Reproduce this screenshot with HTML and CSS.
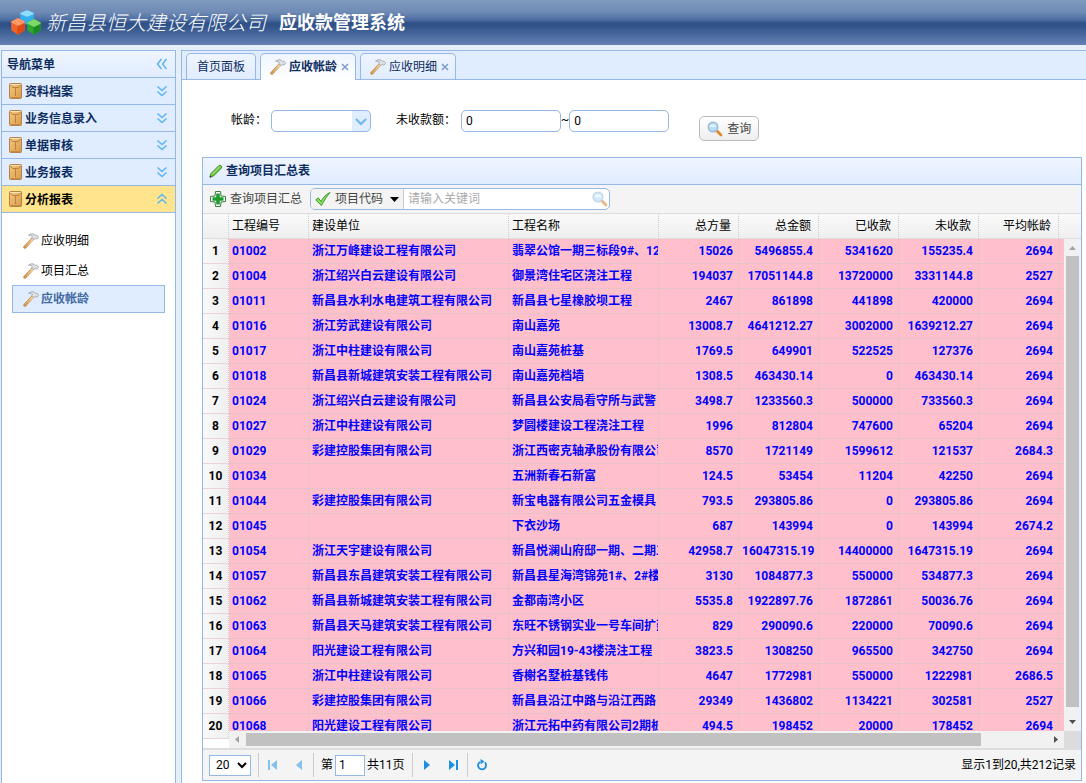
FILE: index.html
```html
<!DOCTYPE html>
<html lang="zh-CN">
<head>
<meta charset="utf-8" />
<title>应收款管理系统</title>
<link rel="stylesheet" href="styles.css">
</head>
<body>
<svg class="defs" width="0" height="0">
    <linearGradient id="wood" x1="0" y1="0" x2="1" y2="1">
        <stop offset="0" stop-color="#f3c983"/>
        <stop offset="1" stop-color="#d99a48"/>
    </linearGradient>
    <linearGradient id="handle" x1="1" y1="0" x2="0" y2="1">
        <stop offset="0" stop-color="#f7d9a4"/>
        <stop offset="1" stop-color="#d8964a"/>
    </linearGradient>
    <symbol id="hammer" viewBox="0 0 16 16">
        <path d="M1.800 14.200L9.500 6" stroke="#b9834a" stroke-width="3" stroke-linecap="round"/>
        <path d="M1.800 14L9.500 5.800L10 6.300L2.300 14.500Z" stroke="url(#handle)" stroke-width="1.400" stroke-linejoin="round"/>
        <path d="M5.500 2.200C7 .8 9.500 .4 11.500 1.300L12.600 2.400L14 2.200L15.600 4.200L14 6.200L12.400 5.400L10.800 6.600L8.800 4.600L9.400 3.200C8.200 2.400 6.800 2.300 5.500 2.200Z" fill="#dfe2e4" stroke="#92979b" stroke-width=".7"/>
    </symbol>
    <symbol id="box" viewBox="0 0 14 16">
        <rect x=".5" y=".5" width="12" height="15" rx="1" fill="url(#wood)" stroke="#b5824a"/>
        <path d="M1.500 1.500H11.500" stroke="#fbe3b4"/>
        <path d="M1.500 2L3.500 4.500H9.500L11.500 2M6.500 5V13" fill="none" stroke="#b87c36" stroke-width=".9"/>
        <path d="M1.500 14.500H11.500" stroke="#c58a42"/>
    </symbol>
    <symbol id="down" viewBox="0 0 12 12">
        <path d="M1.500 1.500L6 5.500L10.500 1.500M1.500 6.500L6 10.500L10.500 6.500" fill="none" stroke="#5cb3f2" stroke-width="1.500"/>
    </symbol>
    <symbol id="lens" viewBox="0 0 16 16">
        <path d="M10 10L14 14" stroke="#e0862b" stroke-width="2.600" stroke-linecap="round"/>
        <circle cx="6" cy="6" r="4.800" fill="#b5dcfa" stroke="#9db9d8" stroke-width="1.400"/>
        <path d="M2.500 5.500C3.500 2.500 8.500 2.500 9.500 5.500C7 6.500 5 6.500 2.500 5.500Z" fill="#e3f3ff"/>
    </symbol>
</svg>

<div class="head">
    <svg class="logo" width="32" height="28" viewBox="0 0 32 28">
        <g stroke-width="1.500" stroke-linejoin="round">
            <path d="M17 2L23 4.500V11.500L17 15L11 11.500V4.500Z" fill="#36aef0" stroke="#36aef0"/>
            <path d="M17 2L23 4.500L17 7L11 4.500Z" fill="#8fdcff" stroke="#8fdcff"/>
            <path d="M8 10L14 13V21L8 25L2 21V13Z" fill="#ef6428" stroke="#ef6428"/>
            <path d="M8 10L14 13L8 16L2 13Z" fill="#ff9a68" stroke="#ff9a68"/>
            <path d="M8 18L14 15.500V21L8 25Z" fill="#dd4a14" stroke="#dd4a14"/>
            <path d="M24 11L30 14V21L24 25L18 21V14Z" fill="#2fa832" stroke="#2fa832"/>
            <path d="M24 11L30 14L24 17L18 14Z" fill="#7fd968" stroke="#7fd968"/>
            <path d="M24 19L30 16.500V21L24 25Z" fill="#1c8d22" stroke="#1c8d22"/>
        </g>
    </svg>
    <span class="company">新昌县恒大建设有限公司</span>
    <span class="system">应收款管理系统</span>
</div>

<div class="layout">
    <div class="west">
        <div class="nav-title">
            <span>导航菜单</span>
            <svg width="12" height="12" viewBox="0 0 12 12"><path d="M5.500 1L1.500 6L5.500 11M10.500 1L6.500 6L10.500 11" fill="none" stroke="#5cb3f2" stroke-width="1.500"/></svg>
        </div>
        <a class="nav-item" href="#"><svg width="14" height="16"><use href="#box"/></svg><span>资料档案</span><svg width="12" height="12"><use href="#down"/></svg></a>
        <a class="nav-item" href="#"><svg width="14" height="16"><use href="#box"/></svg><span>业务信息录入</span><svg width="12" height="12"><use href="#down"/></svg></a>
        <a class="nav-item" href="#"><svg width="14" height="16"><use href="#box"/></svg><span>单据审核</span><svg width="12" height="12"><use href="#down"/></svg></a>
        <a class="nav-item" href="#"><svg width="14" height="16"><use href="#box"/></svg><span>业务报表</span><svg width="12" height="12"><use href="#down"/></svg></a>
        <a class="nav-item nav-open" href="#"><svg width="14" height="16"><use href="#box"/></svg><span>分析报表</span><svg class="up" width="12" height="12"><use href="#down"/></svg></a>
        <div class="sub">
            <a href="#"><svg width="16" height="16"><use href="#hammer"/></svg>应收明细</a>
            <a href="#"><svg width="16" height="16"><use href="#hammer"/></svg>项目汇总</a>
            <a class="selected" href="#"><svg width="16" height="16"><use href="#hammer"/></svg>应收帐龄</a>
        </div>
    </div>

    <div class="center">
        <div class="tabs">
            <a class="tab" href="#">首页面板</a>
            <a class="tab tab-selected" href="#"><svg width="16" height="16"><use href="#hammer"/></svg>应收帐龄<svg class="close" width="8" height="8" viewBox="0 0 8 8"><path d="M1 1L7 7M7 1L1 7"/></svg></a>
            <a class="tab" href="#"><svg width="16" height="16"><use href="#hammer"/></svg>应收明细<svg class="close" width="8" height="8" viewBox="0 0 8 8"><path d="M1 1L7 7M7 1L1 7"/></svg></a>
        </div>

        <form class="search">
            <label for="age">帐龄：</label>
            <select id="age" class="combo"><option></option></select>
            <label class="label-amount" for="min">未收款额：</label>
            <input id="min" class="text" type="text" value="0">
            <label for="max">~</label>
            <input id="max" class="text" type="text" value="0">
            <button class="query" type="button"><svg width="16" height="16"><use href="#lens"/></svg>查询</button>
        </form>

        <div class="panel">
            <div class="panel-title">
                <svg width="16" height="16" viewBox="0 0 16 16"><path d="M2 14L3 10.500L11 2.500C12 1.500 14.500 3.500 13.500 5L5.500 13Z" fill="#6cc644" stroke="#3c8f23"/><path d="M4 11.500L12 3.500" stroke="#c3f0a0"/><path d="M1.500 14.800L2.300 12.500L3.800 14Z" fill="#333"/></svg>
                查询项目汇总表
            </div>
            <div class="toolbar">
                <button class="add" type="button">
                    <svg width="16" height="16" viewBox="0 0 16 16"><path d="M5.500 .5H10.500L11 5L15.500 5.500V10.500L11 11L10.500 15.500H5.500L5 11L.5 10.500V5.500L5 5Z" fill="#fff" stroke="#3b7d3d" stroke-linejoin="round"/><path d="M8 2.500V13.500M2.500 8H13.500" stroke="#1f9a2c" stroke-width="3.600"/></svg>
                    查询项目汇总
                </button>
                <div class="searchbox">
                    <button class="field" type="button">
                        <svg width="16" height="16" viewBox="0 0 16 16"><path d="M.8 9L3.300 6.800L6 10.500C8.500 6 11 3.500 15 1.500C11.500 5.500 9 10 6.500 14.500Z" fill="#8ede66" stroke="#3c9a2a"/></svg>
                        项目代码
                        <svg class="caret" width="9" height="5" viewBox="0 0 9 5"><path d="M0 0H9L4.500 5Z"/></svg>
                    </button>
                    <input type="text" placeholder="请输入关键词" aria-label="关键词">
                    <svg class="faded" width="16" height="16"><use href="#lens"/></svg>
                </div>
            </div>

            <div class="grid">
                <table class="rownum">
                    <tr><td class="corner"></td></tr>
                    <tr><td>1</td></tr>
                    <tr><td>2</td></tr>
                    <tr><td>3</td></tr>
                    <tr><td>4</td></tr>
                    <tr><td>5</td></tr>
                    <tr><td>6</td></tr>
                    <tr><td>7</td></tr>
                    <tr><td>8</td></tr>
                    <tr><td>9</td></tr>
                    <tr><td>10</td></tr>
                    <tr><td>11</td></tr>
                    <tr><td>12</td></tr>
                    <tr><td>13</td></tr>
                    <tr><td>14</td></tr>
                    <tr><td>15</td></tr>
                    <tr><td>16</td></tr>
                    <tr><td>17</td></tr>
                    <tr><td>18</td></tr>
                    <tr><td>19</td></tr>
                    <tr><td>20</td></tr>
                </table>
                <div class="view">
                    <div class="rows">
                        <table class="data">
                            <colgroup><col class="c-code"><col class="c-unit"><col class="c-name"><col class="c-num"><col class="c-num"><col class="c-num"><col class="c-num"><col class="c-num"><col></colgroup>
                            <thead>
                                <tr><th>工程编号</th><th>建设单位</th><th>工程名称</th><th>总方量</th><th>总金额</th><th>已收款</th><th>未收款</th><th>平均帐龄</th><th></th></tr>
                            </thead>
                            <tbody>
                                <tr><td>01002</td><td>浙江万峰建设工程有限公司</td><td>翡翠公馆一期三标段9#、12#楼</td><td>15026</td><td>5496855.4</td><td>5341620</td><td>155235.4</td><td>2694</td><td></td></tr>
                                <tr><td>01004</td><td>浙江绍兴白云建设有限公司</td><td>御景湾住宅区浇注工程</td><td>194037</td><td>17051144.8</td><td>13720000</td><td>3331144.8</td><td>2527</td><td></td></tr>
                                <tr><td>01011</td><td>新昌县水利水电建筑工程有限公司</td><td>新昌县七星橡胶坝工程</td><td>2467</td><td>861898</td><td>441898</td><td>420000</td><td>2694</td><td></td></tr>
                                <tr><td>01016</td><td>浙江劳武建设有限公司</td><td>南山嘉苑</td><td>13008.7</td><td>4641212.27</td><td>3002000</td><td>1639212.27</td><td>2694</td><td></td></tr>
                                <tr><td>01017</td><td>浙江中柱建设有限公司</td><td>南山嘉苑桩基</td><td>1769.5</td><td>649901</td><td>522525</td><td>127376</td><td>2694</td><td></td></tr>
                                <tr><td>01018</td><td>新昌县新城建筑安装工程有限公司</td><td>南山嘉苑档墙</td><td>1308.5</td><td>463430.14</td><td>0</td><td>463430.14</td><td>2694</td><td></td></tr>
                                <tr><td>01024</td><td>浙江绍兴白云建设有限公司</td><td>新昌县公安局看守所与武警</td><td>3498.7</td><td>1233560.3</td><td>500000</td><td>733560.3</td><td>2694</td><td></td></tr>
                                <tr><td>01027</td><td>浙江中柱建设有限公司</td><td>梦圆楼建设工程浇注工程</td><td>1996</td><td>812804</td><td>747600</td><td>65204</td><td>2694</td><td></td></tr>
                                <tr><td>01029</td><td>彩建控股集团有限公司</td><td>浙江西密克轴承股份有限公司</td><td>8570</td><td>1721149</td><td>1599612</td><td>121537</td><td>2684.3</td><td></td></tr>
                                <tr><td>01034</td><td></td><td>五洲新春石新富</td><td>124.5</td><td>53454</td><td>11204</td><td>42250</td><td>2694</td><td></td></tr>
                                <tr><td>01044</td><td>彩建控股集团有限公司</td><td>新宝电器有限公司五金模具</td><td>793.5</td><td>293805.86</td><td>0</td><td>293805.86</td><td>2694</td><td></td></tr>
                                <tr><td>01045</td><td></td><td>下衣沙场</td><td>687</td><td>143994</td><td>0</td><td>143994</td><td>2674.2</td><td></td></tr>
                                <tr><td>01054</td><td>浙江天宇建设有限公司</td><td>新昌悦澜山府邸一期、二期工程</td><td>42958.7</td><td>16047315.19</td><td>14400000</td><td>1647315.19</td><td>2694</td><td></td></tr>
                                <tr><td>01057</td><td>新昌县东昌建筑安装工程有限公司</td><td>新昌县星海湾锦苑1#、2#楼</td><td>3130</td><td>1084877.3</td><td>550000</td><td>534877.3</td><td>2694</td><td></td></tr>
                                <tr><td>01062</td><td>新昌县新城建筑安装工程有限公司</td><td>金都南湾小区</td><td>5535.8</td><td>1922897.76</td><td>1872861</td><td>50036.76</td><td>2694</td><td></td></tr>
                                <tr><td>01063</td><td>新昌县天马建筑安装工程有限公司</td><td>东旺不锈钢实业一号车间扩建</td><td>829</td><td>290090.6</td><td>220000</td><td>70090.6</td><td>2694</td><td></td></tr>
                                <tr><td>01064</td><td>阳光建设工程有限公司</td><td>方兴和园19-43楼浇注工程</td><td>3823.5</td><td>1308250</td><td>965500</td><td>342750</td><td>2694</td><td></td></tr>
                                <tr><td>01065</td><td>浙江中柱建设有限公司</td><td>香榭名墅桩基钱伟</td><td>4647</td><td>1772981</td><td>550000</td><td>1222981</td><td>2686.5</td><td></td></tr>
                                <tr><td>01066</td><td>彩建控股集团有限公司</td><td>新昌县沿江中路与沿江西路</td><td>29349</td><td>1436802</td><td>1134221</td><td>302581</td><td>2527</td><td></td></tr>
                                <tr><td>01068</td><td>阳光建设工程有限公司</td><td>浙江元拓中药有限公司2期桩基</td><td>494.5</td><td>198452</td><td>20000</td><td>178452</td><td>2694</td><td></td></tr>
                            </tbody>
                        </table>
                    </div>
                    <div class="vscroll">
                        <div class="vscroll-head"></div>
                        <svg width="17" height="17" viewBox="0 0 17 17"><path d="M5 11H12L8.500 7Z" fill="#a3a3a3"/></svg>
                        <div class="vthumb"></div>
                        <svg width="17" height="17" viewBox="0 0 17 17"><path d="M5 6H12L8.500 10Z" fill="#505050"/></svg>
                    </div>
                    <div class="hscroll">
                        <svg width="17" height="17" viewBox="0 0 17 17"><path d="M10 5V12L6 8.500Z" fill="#a3a3a3"/></svg>
                        <div class="hthumb"></div>
                        <svg width="17" height="17" viewBox="0 0 17 17"><path d="M7 5V12L11 8.500Z" fill="#505050"/></svg>
                    </div>
                    <div class="scroll-corner"></div>
                </div>
            </div>

            <div class="pager">
                <select class="page-size" aria-label="每页记录"><option>20</option></select>
                <i class="sep"></i>
                <button class="off" type="button" aria-label="首页"><svg width="10" height="10" viewBox="0 0 10 10"><path d="M0 0H2V10H0ZM9 0V10L3 5Z"/></svg></button>
                <button class="off" type="button" aria-label="上一页"><svg width="10" height="10" viewBox="0 0 10 10"><path d="M8 0V10L2 5Z"/></svg></button>
                <i class="sep"></i>
                <label class="page">第<input type="text" value="1">共11页</label>
                <i class="sep"></i>
                <button type="button" aria-label="下一页"><svg width="10" height="10" viewBox="0 0 10 10"><path d="M2 0V10L8 5Z"/></svg></button>
                <button type="button" aria-label="末页"><svg width="10" height="10" viewBox="0 0 10 10"><path d="M8 0H10V10H8ZM1 0V10L7 5Z"/></svg></button>
                <i class="sep"></i>
                <button type="button" aria-label="刷新"><svg width="12" height="12" viewBox="0 0 12 12"><path d="M8.800 3.400A4 4 0 1 1 4 2.900" fill="none" stroke="#1b8fe6" stroke-width="1.800"/><path d="M4.500 0L8.500 2.600L4.500 5.200Z"/></svg></button>
                <span class="info">显示1到20,共212记录</span>
            </div>
        </div>
    </div>
</div>
</body>
</html>
```
FILE: styles.css
```css
*{ padding:0; margin:0; box-sizing:border-box;}
body{
    height:100vh;
    overflow:hidden;
    display:flex;
    flex-direction:column;
    background:#e6eef8;
    font:12px/18px Roboto,"Noto Sans CJK SC",sans-serif;
    color:#000;
}
a{ color:inherit; text-decoration:none;}
svg{ flex:none;}
input,select,button{ font:inherit; color:inherit; outline:none;}
button{ border:0; background:none; cursor:pointer;}
.defs{ position:absolute;}

/* 顶部 */
.head{
    flex:none;
    height:45px;
    padding-left:10px;
    display:flex;
    align-items:center;
    color:#fff;
    background:linear-gradient(#7f99be 0,#6f8bb5 12px,#4c6ca0 20px,#2f5188 23px,#31538a 26px,#6482b2 45px);
}
.company{
    margin-left:4px;
    font-size:20px;
    font-weight:300;
    font-style:italic;
}
.system{
    margin-left:13px;
    font-size:18px;
    font-weight:bold;
}
.layout{
    flex:1;
    min-height:0;
    display:flex;
    gap:5px;
    padding:5px 0 0 1px;
}

/* 导航菜单 */
.west{
    flex:none;
    width:175px;
    border:1px solid #95b8e7;
    border-bottom:0;
    background:#fff;
}
.nav-title,.nav-item{
    height:27px;
    display:flex;
    align-items:center;
    justify-content:space-between;
    padding:0 7px 0 5px;
    border-bottom:1px solid #95b8e7;
    color:#0e2d5f;
    font-weight:bold;
}
.nav-title{ background:linear-gradient(#eff5ff,#e0ecff);}
.nav-item{ background:#e0ecff; padding-left:7px;}
.nav-title span,.nav-item span{ padding-top:2px;}
.nav-item span{ flex:1; margin-left:2px;}
.nav-open{ background:#ffe48d; color:#000;}
.up{ transform:rotate(180deg);}
.sub{ padding:14px 10px;}
.sub a{
    display:flex;
    align-items:center;
    gap:2px;
    height:28px;
    margin-bottom:2px;
    padding-left:10px;
    border:1px solid transparent;
}
.sub .selected{
    margin-top:-2px;
    border-color:#95b8e7;
    background:#e0ecff;
    color:#416aa3;
    font-weight:bold;
}

/* 选项卡 */
.center{
    flex:1;
    min-width:0;
    display:flex;
    flex-direction:column;
    border:1px solid #95b8e7;
    border-width:1px 0 0 1px;
    background:#fff;
}
.tabs{
    flex:none;
    display:flex;
    align-items:flex-end;
    gap:4px;
    height:29px;
    padding-left:4px;
    border-bottom:1px solid #95b8e7;
    background:#e0ecff;
}
.tab{
    display:flex;
    align-items:center;
    height:26px;
    padding:0 10px;
    border:1px solid #95b8e7;
    border-bottom:0;
    border-radius:5px 5px 0 0;
    background:linear-gradient(#eff5ff,#e0ecff);
    color:#0e2d5f;
}
.tab svg:first-child{ margin:0 3px 0 -1px;}
.tab .close{
    margin:0 -4px 0 4px;
    fill:none;
    stroke:#7a9cd0;
    stroke-width:1.5;
}
.tab-selected{
    margin-bottom:-1px;
    height:27px;
    background:linear-gradient(#eff5ff,#fff);
    font-weight:bold;
}

/* 查询条件 */
.search{
    flex:none;
    display:flex;
    align-items:flex-start;
    height:77px;
    padding:30px 0 0 49px;
}
.search label{ line-height:20px;}
.combo,.text{
    width:100px;
    height:22px;
    border:1px solid #95b8e7;
    border-radius:5px;
    background:#fff;
    padding:0 4px;
}
.combo{
    appearance:none;
    margin-left:4px;
    background:url("data:image/svg+xml,%3Csvg xmlns='http://www.w3.org/2000/svg' width='18' height='20'%3E%3Crect width='18' height='20' fill='%23e0ecff'/%3E%3Cpath d='M4 8L9 13L14 8' fill='none' stroke='%236bb8f0' stroke-width='2'/%3E%3C/svg%3E") right no-repeat #fff;
}
.search .label-amount{ margin:0 5px 0 25px;}
.query{
    display:flex;
    align-items:center;
    gap:4px;
    height:25px;
    margin:6px 0 0 30px;
    padding:0 7px;
    border:1px solid #bbb;
    border-radius:5px;
    background:linear-gradient(#fff,#eee);
    color:#444;
}

/* 数据表 */
.panel{
    flex:1;
    min-height:0;
    display:flex;
    flex-direction:column;
    margin:0 4px 2px 20px;
    border:1px solid #95b8e7;
}
.panel-title{
    flex:none;
    display:flex;
    align-items:center;
    gap:2px;
    height:27px;
    padding-left:5px;
    border-bottom:1px solid #95b8e7;
    background:linear-gradient(#eff5ff,#e0ecff);
    color:#0e2d5f;
    font-weight:bold;
}
.toolbar{
    flex:none;
    display:flex;
    align-items:center;
    height:29px;
    padding-left:7px;
    border-bottom:1px solid #ddd;
    background:#f4f4f4;
    color:#444;
}
.add,.field{ display:flex; align-items:center; gap:4px;}
.searchbox{
    display:flex;
    align-items:center;
    width:300px;
    height:22px;
    margin-left:8px;
    border:1px solid #95b8e7;
    border-radius:5px;
    background:#fff;
    overflow:hidden;
}
.field{
    height:20px;
    padding:0 4px;
    border-right:1px solid #ccc;
    background:#f4f4f4;
}
.caret{ margin-left:3px; fill:#000;}
.searchbox input{ flex:1; min-width:0; border:0; padding-left:4px;}
.searchbox input::placeholder{ color:#aaa;}
.faded{ margin-right:1px; opacity:.6;}

.grid{
    flex:1;
    min-height:0;
    display:flex;
    align-items:flex-start;
    overflow:hidden;
}
table{
    border-collapse:separate;
    border-spacing:0;
    table-layout:fixed;
    font-weight:bold;
}
td,th{
    height:25px;
    padding:0 5px 0 3px;
    border:1px dotted #ccc;
    border-width:0 1px 1px 0;
    line-height:18px;
    white-space:nowrap;
    overflow:hidden;
}
.rownum{ flex:none; width:26px;}
.rownum td{
    padding:0;
    text-align:center;
    background:linear-gradient(to right,#f9f9f9,#efefef);
    border-bottom:1px solid #ecd3d8;
}
.rownum .corner{ background:linear-gradient(#f9f9f9,#efefef); border-bottom-color:#ddd;}
.view{
    flex:1;
    min-width:0;
    height:100%;
    display:grid;
    grid-template:1fr 17px / 1fr 17px;
}
.rows{ min-width:0; min-height:0; overflow:hidden;}
.data{ width:100%;}
.data th{
    background:linear-gradient(#f9f9f9,#efefef);
    border-bottom:1px solid #ddd;
    font-weight:normal;
    text-align:left;
}
.data th:nth-child(n+4){ text-align:right; padding-right:7px;}
.data td{
    background:#ffc0cb;
    border-color:#cfc6c8;
    color:#00f;
}
.data td:nth-child(3){ padding-right:0;}
.data td:nth-child(n+4){ text-align:right;}
.data th:last-child,.data td:last-child{ border-right:0; padding:0;}
.c-code,.c-num{ width:80px;}
.c-unit{ width:200px;}
.c-name{ width:150px;}
.vscroll{
    display:flex;
    flex-direction:column;
    min-height:0;
    background:#f1f1f1;
}
.vscroll-head{
    flex:none;
    height:25px;
    border-bottom:1px solid #ddd;
    background:linear-gradient(#f9f9f9,#efefef);
}
.vthumb{ flex:1; margin:0 2px 7px; background:#c1c1c1;}
.hscroll{ display:flex; background:#f1f1f1;}
.hthumb{ flex:1; margin:2px 66px 2px 0; background:#c1c1c1;}
.scroll-corner{ background:#dcdcdc;}

/* 分页 */
.pager{
    flex:none;
    display:flex;
    align-items:center;
    height:32px;
    padding:0 5px 0 6px;
    border-top:2px solid #ddd;
    background:#f4f4f4;
}
.page-size{
    width:42px;
    height:21px;
    margin-right:6px;
    border:1px solid #95b8e7;
    background:#fff;
    padding-left:2px;
}
.sep{ width:1px; height:24px; margin:0 1px; background:#ccc;}
.pager button{
    display:flex;
    align-items:center;
    justify-content:center;
    width:26px;
    height:26px;
    fill:#1b8fe6;
}
.pager .off{ opacity:.5;}
.page{ display:flex; align-items:center; margin:0 6px;}
.page input{
    width:30px;
    height:21px;
    margin:0 2px;
    padding:0 3px;
    border:1px solid #95b8e7;
}
.info{ margin-left:auto;}
```
